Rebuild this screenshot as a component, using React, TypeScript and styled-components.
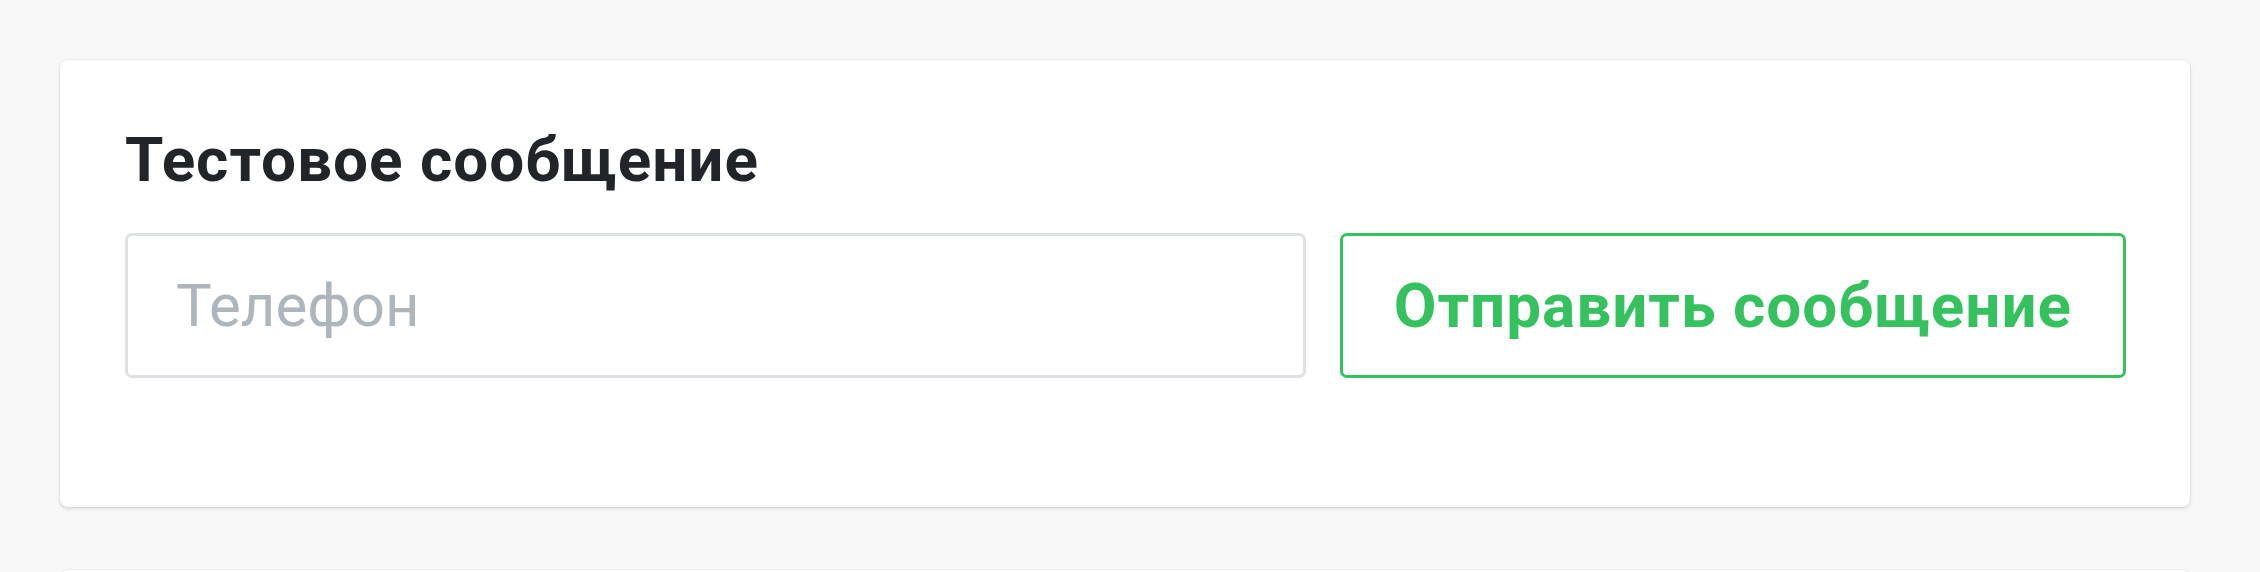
import styled, { createGlobalStyle } from "styled-components";

const GlobalStyle = createGlobalStyle`
  html, body {
    margin: 0;
    padding: 0;
    background: #f8f8f8;
  }
  body {
    font-family: Roboto, "Liberation Sans", Arial, sans-serif;
  }
`;

const Page = styled.div`
  display: flex;
  flex-direction: column;
  gap: 63px;
  padding: 60px 70px 0 60px;
  height: 572px;
  box-sizing: border-box;
  overflow: hidden;
`;

const Card = styled.section`
  background: #ffffff;
  border-radius: 8px;
  box-shadow: 0 2px 4px rgba(0, 0, 0, 0.12), 0 0 0 1px rgba(0, 0, 0, 0.04);
  padding: 64px 64px 129px 65px;
  flex-shrink: 0;
`;

const Title = styled.h2`
  margin: 0 0 37px;
  font-size: 62px;
  line-height: 72px;
  font-weight: 700;
  letter-spacing: 1px;
  color: #212529;
`;

const Row = styled.div`
  display: flex;
  gap: 34px;
`;

const PhoneInput = styled.input`
  flex: 1;
  min-width: 0;
  height: 145px;
  box-sizing: border-box;
  padding: 0 48px;
  border: 3px solid #dee2e6;
  border-radius: 7px;
  font-family: inherit;
  font-size: 60px;
  color: #212529;
  background: #fff;
  outline: none;

  &::placeholder {
    color: #adb5bd;
  }
`;

const SendButton = styled.button`
  height: 145px;
  box-sizing: border-box;
  padding: 0 51px;
  border: 3px solid #35c15e;
  border-radius: 7px;
  background: #fff;
  color: #35c15e;
  font-family: inherit;
  font-size: 62px;
  font-weight: 700;
  letter-spacing: 1px;
  white-space: nowrap;
  cursor: pointer;
`;

export default function App() {
  return (
    <>
      <GlobalStyle />
      <Page>
        <Card>
          <Title>Тестовое сообщение</Title>
          <Row>
            <PhoneInput type="tel" placeholder="Телефон" />
            <SendButton type="button">Отправить сообщение</SendButton>
          </Row>
        </Card>
        <Card />
      </Page>
    </>
  );
}
